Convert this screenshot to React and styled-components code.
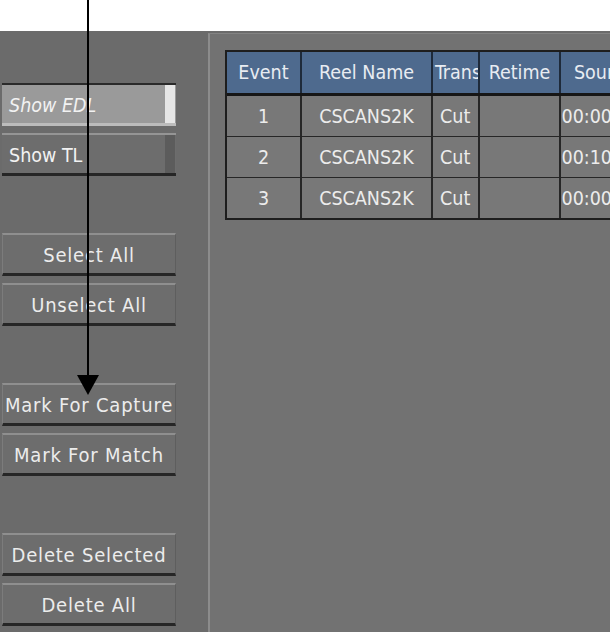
import styled, { createGlobalStyle, css } from "styled-components";

const GlobalStyle = createGlobalStyle`
  html, body {
    margin: 0;
    padding: 0;
    background: #ffffff;
  }
  body {
    font-family: "DejaVu Sans Condensed", "DejaVu Sans", sans-serif;
  }
`;

const Page = styled.div`
  position: relative;
  width: 611px;
  height: 632px;
  padding-top: 31px;
  box-sizing: border-box;
  overflow: hidden;
`;

const Workspace = styled.div`
  display: flex;
  width: 610px;
  height: 601px;
  background: #6b6b6b;
`;

const Sidebar = styled.div`
  width: 208px;
  flex-shrink: 0;
  display: flex;
  flex-direction: column;
  padding: 52px 0 0 2px;
  box-sizing: border-box;
`;

const Group = styled.div`
  display: flex;
  flex-direction: column;
  gap: 7px;
  margin-bottom: ${(p) => p.$after || 0}px;
`;

const Button = styled.div`
  width: 174px;
  height: 43px;
  box-sizing: border-box;
  display: flex;
  align-items: center;
  justify-content: center;
  padding-top: 2px;
  background: #6d6d6d;
  border-top: 2px solid #8f8f8f;
  border-left: 1px solid #7c7c7c;
  border-right: 1px solid #5e5e5e;
  border-bottom: 3px solid #262626;
  color: #ececec;
  font-size: 20px;
  letter-spacing: 0.8px;
  white-space: nowrap;
`;

const Toggle = styled.div`
  width: 174px;
  height: 43px;
  box-sizing: border-box;
  display: flex;
  align-items: center;
  padding: 2px 0 0 7px;
  position: relative;
  font-size: 19.5px;
  color: #f2f2f2;
  ${(p) =>
    p.$on
      ? css`
          background: #9a9a9a;
          border-top: 2px solid #2a2a2a;
          border-bottom: 3px solid #bcbcbc;
          font-style: italic;
        `
      : css`
          background: #6d6d6d;
          border-top: 2px solid #959595;
          border-bottom: 3px solid #262626;
        `}
`;

const Strip = styled.div`
  position: absolute;
  top: 0;
  bottom: 0;
  right: 1px;
  width: 10px;
  background: ${(p) => (p.$on ? "#e6e6e6" : "#5c5c5c")};
`;

const Panel = styled.div`
  flex: 1;
  margin-top: 2px;
  border-left: 2px solid #8c8c8c;
  border-top: 1px solid #838383;
  background: #727272;
  padding: 16px 0 0 15px;
  overflow: hidden;
`;

const Table = styled.div`
  display: inline-flex;
  flex-direction: column;
  border-left: 2px solid #1e1e1e;
  border-top: 2px solid #1e1e1e;
  border-bottom: 2px solid #1e1e1e;
`;

const Row = styled.div`
  display: flex;
  height: ${(p) => (p.$head ? 41 : 40)}px;
  border-bottom: ${(p) => (p.$head ? "3px solid #161616" : "1px solid #262626")};
  &:last-child {
    border-bottom: none;
  }
`;

const Cell = styled.div`
  width: ${(p) => p.$w}px;
  flex-shrink: 0;
  box-sizing: border-box;
  border-right: 2px solid ${(p) => (p.$head ? "#1e2a3a" : "#262626")};
  background: ${(p) => (p.$head ? "#4e6a8e" : "#787878")};
  color: ${(p) => (p.$head ? "#e8ecf2" : "#ececec")};
  font-size: 19.5px;
  display: flex;
  align-items: center;
  justify-content: ${(p) => (p.$left ? "flex-start" : "center")};
  padding-left: ${(p) => p.$pad || 0}px;
  overflow: hidden;
  white-space: nowrap;
`;

const Arrow = styled.svg`
  position: absolute;
  left: 0;
  top: 0;
  pointer-events: none;
`;

const columns = [
  { key: "event", title: "Event", w: 75 },
  { key: "reel", title: "Reel Name", w: 131 },
  { key: "trans", title: "Trans", w: 47, left: true },
  { key: "retime", title: "Retime", w: 81 },
  { key: "source", title: "Source In", w: 110 },
];

const rows = [
  { event: "1", reel: "CSCANS2K", trans: "Cut", retime: "", source: "00:00:00:00" },
  { event: "2", reel: "CSCANS2K", trans: "Cut", retime: "", source: "00:10:00:00" },
  { event: "3", reel: "CSCANS2K", trans: "Cut", retime: "", source: "00:00:00:00" },
];

export default function App() {
  return (
    <>
      <GlobalStyle />
      <Page>
        <Workspace>
          <Sidebar>
            <Group $after={57}>
              <Toggle $on>
                Show EDL
                <Strip $on />
              </Toggle>
              <Toggle>
                Show TL
                <Strip />
              </Toggle>
            </Group>
            <Group $after={57}>
              <Button>Select All</Button>
              <Button>Unselect All</Button>
            </Group>
            <Group $after={57}>
              <Button>Mark For Capture</Button>
              <Button>Mark For Match</Button>
            </Group>
            <Group>
              <Button>Delete Selected</Button>
              <Button>Delete All</Button>
            </Group>
          </Sidebar>
          <Panel>
            <Table>
              <Row $head>
                {columns.map((c) => (
                  <Cell key={c.key} $w={c.w} $head $left={c.left} $pad={c.left ? 2 : 0}>
                    {c.title}
                  </Cell>
                ))}
              </Row>
              {rows.map((r) => (
                <Row key={r.event}>
                  {columns.map((c) => (
                    <Cell key={c.key} $w={c.w} $left={c.left} $pad={c.left ? 7 : 0}>
                      {r[c.key]}
                    </Cell>
                  ))}
                </Row>
              ))}
            </Table>
          </Panel>
        </Workspace>
        <Arrow width="611" height="632" viewBox="0 0 611 632">
          <line x1="88" y1="0" x2="88" y2="378" stroke="#000" strokeWidth="2" />
          <polygon points="77,375 99,375 88,395" fill="#000" />
        </Arrow>
      </Page>
    </>
  );
}
